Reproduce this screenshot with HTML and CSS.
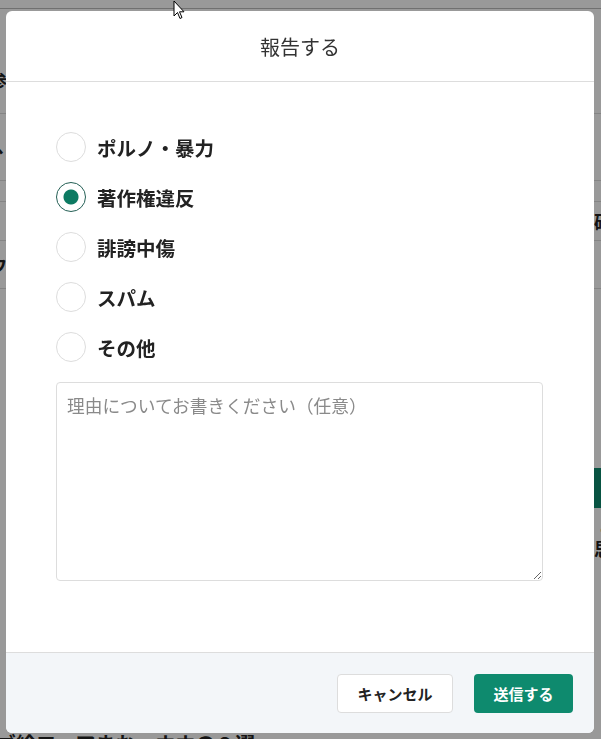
FILE: index.html
```html
<!DOCTYPE html>
<html lang="ja">
<head>
  <meta charset="UTF-8">
  <meta name="viewport" content="width=device-width, initial-scale=1.0">
  <title>報告する</title>
  <link rel="stylesheet" href="styles.css">
</head>
<body>

<div class="page">
  <div class="page-top"></div>
  <div class="page-row r1"><span class="frag-l">参</span></div>
  <div class="page-row r2"><span class="frag-l">ヽ</span></div>
  <div class="page-row r3"></div>
  <div class="page-row r4"><span class="frag-l">#</span><span class="frag-r">確</span></div>
  <div class="page-row r5"><span class="frag-l">ウ</span></div>
  <div class="page-side">
    <span class="green-tab"></span>
    <span class="frag-r small">ご</span>
    <span class="frag-r">思</span>
  </div>
  <div class="page-bottom">ゴ絵ローアまお、ホホの９選</div>
</div>

<div class="backdrop"></div>

<div class="modal">
  <div class="modal-header">報告する</div>

  <form class="modal-body">
    <label class="option">
      <input type="radio" name="reason">
      <span>ポルノ・暴力</span>
    </label>
    <label class="option">
      <input type="radio" name="reason" checked>
      <span>著作権違反</span>
    </label>
    <label class="option">
      <input type="radio" name="reason">
      <span>誹謗中傷</span>
    </label>
    <label class="option">
      <input type="radio" name="reason">
      <span>スパム</span>
    </label>
    <label class="option">
      <input type="radio" name="reason">
      <span>その他</span>
    </label>
    <textarea class="reason" placeholder="理由についてお書きください（任意）"></textarea>
  </form>

  <div class="modal-footer">
    <button class="btn cancel" type="button">キャンセル</button>
    <button class="btn submit" type="button">送信する</button>
  </div>
</div>

<svg class="cursor" width="12" height="20" viewBox="0 0 12 20">
  <path d="M1 1 L1 16 L4.5 12.5 L7 18.5 L9 17.5 L6.5 11.8 L11 11.8 Z" fill="#fff" stroke="#000" stroke-width="1"/>
</svg>

</body>
</html>
```

FILE: styles.css
```css
body {
  margin: 0;
  font-family: "Noto Sans CJK JP", "Noto Sans", sans-serif;
  background: #fff;
  color: #222;
}

/* page behind the dialog */
.page {
  height: 739px;
  overflow: hidden;
  display: flex;
  flex-direction: column;
}

.page-top {
  height: 8px;
  flex: none;
  border-bottom: 1px solid #bbb;
}

.page-row {
  flex: none;
  display: flex;
  justify-content: space-between;
  align-items: center;
  border-bottom: 1px solid #ddd;
  font-weight: bold;
  font-size: 18px;
  line-height: 1;
}

.page-row.r1 { height: 105px; padding-top: 38px; box-sizing: border-box; }
.page-row.r2 { height: 67px; padding-top: 2px; box-sizing: border-box; }
.page-row.r3 { height: 20px; }
.page-row.r4 { height: 38px; }
.page-row.r5 { height: 48px; align-items: flex-start; padding-top: 14px; box-sizing: border-box; }

.frag-l {
  margin-left: -11px;
}

.frag-r {
  margin-left: auto;
  margin-right: -11px;
}

.page-side {
  display: flex;
  flex-direction: column;
  align-items: flex-end;
  padding-top: 179px;
  font-weight: bold;
  font-size: 18px;
  line-height: 1;
}

.page-side .small {
  margin-top: 12px;
  font-size: 13px;
  font-weight: normal;
}

.page-side .frag-r:last-child {
  margin-top: 6px;
}

.green-tab {
  width: 30px;
  height: 40px;
  margin-right: -16px;
  background: #0e8a6e;
}

.page-bottom {
  margin-top: auto;
  margin-bottom: -16px;
  margin-left: -4px;
  font-size: 20px;
  font-weight: bold;
  line-height: 1.1;
}

.backdrop {
  position: fixed;
  inset: 0;
  background: rgba(0, 0, 0, 0.4);
}

/* dialog */
.modal {
  position: fixed;
  top: 11px;
  left: 6px;
  width: 588px;
  height: 722px;
  display: flex;
  flex-direction: column;
  background: #fff;
  border-radius: 6px;
  overflow: hidden;
}

.modal-header {
  height: 70px;
  display: flex;
  align-items: center;
  justify-content: center;
  border-bottom: 1px solid #ddd;
  font-size: 20px;
  color: #333;
}

.modal-body {
  flex: 1;
  display: flex;
  flex-direction: column;
  gap: 20px;
  padding: 50px 51px 0 50px;
}

.option {
  display: flex;
  align-items: center;
  gap: 11px;
  height: 30px;
  font-size: 19.5px;
  font-weight: bold;
  color: #222;
  cursor: pointer;
}

.option input {
  appearance: none;
  -webkit-appearance: none;
  width: 30px;
  height: 30px;
  margin: 0;
  border: 1px solid #ddd;
  border-radius: 50%;
  background: #fff;
}

.option input:checked {
  border-color: #245f55;
  background: radial-gradient(circle, #0c7a62 0 7px, #fff 8px);
}

.reason {
  height: 199px;
  box-sizing: border-box;
  padding: 9px 10px;
  border: 1px solid #ddd;
  border-radius: 4px;
  font-family: inherit;
  font-size: 17.7px;
  resize: vertical;
}

.reason::placeholder {
  color: #8a8a8a;
}

.modal-footer {
  height: 80px;
  display: flex;
  align-items: center;
  justify-content: flex-end;
  gap: 21px;
  padding-right: 21px;
  border-top: 1px solid #ddd;
  background: #f3f6f9;
}

.btn {
  height: 39px;
  border-radius: 4px;
  font-family: inherit;
  font-size: 15px;
  font-weight: bold;
  cursor: pointer;
}

.btn.cancel {
  width: 116px;
  border: 1px solid #ddd;
  background: #fff;
  color: #222;
}

.btn.submit {
  width: 99px;
  border: none;
  background: #0e8a6e;
  color: #fff;
}

.cursor {
  position: fixed;
  top: 0;
  left: 173px;
}
```
